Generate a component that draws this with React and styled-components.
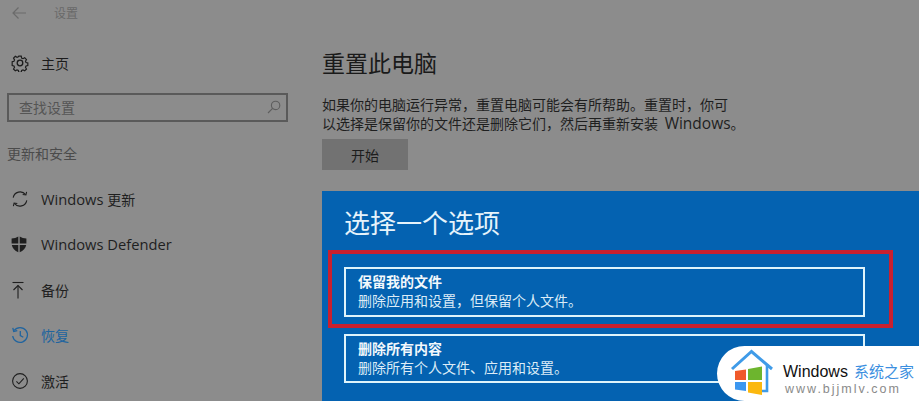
import styled, { createGlobalStyle } from "styled-components";

const cjk = `"Noto Sans CJK SC", "Noto Sans", sans-serif`;

const GlobalStyle = createGlobalStyle`
  html, body {
    margin: 0;
    padding: 0;
    background: #8c8c8c;
    overflow: hidden;
  }
  body {
    font-family: "Open Sans", ${cjk};
  }
`;

const navItems = [
  { label: "更新", latin: "Windows ", icon: "update" },
  { label: "", latin: "Windows Defender", icon: "shield" },
  { label: "备份", icon: "backup" },
  { label: "恢复", icon: "restore", active: true },
  { label: "激活", icon: "check" },
];

const options = [
  { title: "保留我的文件", text: "删除应用和设置，但保留个人文件。" },
  { title: "删除所有内容", text: "删除所有个人文件、应用和设置。" },
];

function NavIcon({ name }) {
  if (name === "home") {
    return (
      <svg width="18" height="18" viewBox="0 0 18 18" fill="none" stroke="currentColor" strokeWidth="1.3">
        <circle cx="9" cy="9" r="2.8" />
        <path d="M7.6 1.4h2.8l.4 2.1 1.5.7 1.9-1.1 2 2-1.1 1.9.6 1.5 2 .5v2.8l-2 .5-.6 1.5 1.1 1.9-2 2-1.9-1.1-1.5.6-.4 2.1H7.6l-.4-2.1-1.5-.6-1.9 1.1-2-2 1.1-1.9-.6-1.5-2-.5V7.5l2-.5.6-1.5-1.1-1.9 2-2 1.9 1.1 1.5-.7z" transform="translate(.9 .9) scale(.9)" />
      </svg>
    );
  }
  if (name === "update") {
    return (
      <svg width="18" height="18" viewBox="0 0 18 18" fill="none" stroke="currentColor" strokeWidth="1.1">
        <path d="M2.2 7.6A7 7 0 0 1 14.6 4.6" />
        <path d="M15.8 10.4A7 7 0 0 1 3.4 13.4" />
        <path d="M15.6 1.8l-.7 3.2-3.2-.5" />
        <path d="M2.4 16.2l.7-3.2 3.2.5" />
      </svg>
    );
  }
  if (name === "shield") {
    return (
      <svg width="16" height="17" viewBox="0 0 16 17" fill="currentColor">
        <path d="M7.3.6C5.5 1.8 3 2.5.6 2.6v5h6.7zM8.7.6c1.8 1.2 4.3 1.9 6.7 2v5H8.7zM.8 9c.5 3.3 3 5.8 6.5 7.2V9zM15.2 9c-.5 3.3-3 5.8-6.5 7.2V9z" />
      </svg>
    );
  }
  if (name === "backup") {
    return (
      <svg width="14" height="18" viewBox="0 0 14 18" fill="none" stroke="currentColor" strokeWidth="1.1">
        <path d="M1.5 1.5h11" />
        <path d="M7 17.5V4.5" />
        <path d="M2.5 9l4.5-4.5L11.5 9" />
      </svg>
    );
  }
  if (name === "restore") {
    return (
      <svg width="18" height="18" viewBox="0 0 18 18" fill="none" stroke="currentColor" strokeWidth="1.3">
        <path d="M3.2 4.4A7.4 7.4 0 1 1 1.7 10" />
        <path d="M1.8 1.8l.9 3.6 3.6-.7" />
        <path d="M9.3 5v4.6l3 1.7" />
      </svg>
    );
  }
  if (name === "check") {
    return (
      <svg width="18" height="18" viewBox="0 0 18 18" fill="none" stroke="currentColor" strokeWidth="1.1">
        <circle cx="9" cy="9" r="7.4" />
        <path d="M5.4 9.4l2.5 2.4 4.9-5.4" />
      </svg>
    );
  }
  return null;
}

export default function App() {
  return (
    <Page>
      <GlobalStyle />
      <Sidebar>
        <TopBar>
          <svg width="16" height="14" viewBox="0 0 16 14" fill="none" stroke="#6b6b6b" strokeWidth="1.2">
            <path d="M15 7H2M7.5 1.5L2 7l5.5 5.5" />
          </svg>
          <TopTitle>设置</TopTitle>
        </TopBar>
        <HomeRow>
          <IconSlot><NavIcon name="home" /></IconSlot>
          主页
        </HomeRow>
        <SearchBox>
          <SearchText>查找设置</SearchText>
          <svg width="14" height="14" viewBox="0 0 14 14" fill="none" stroke="#5e5e5e" strokeWidth="1.1">
            <circle cx="8.6" cy="5.4" r="4.2" />
            <path d="M5.6 8.4L1 13" />
          </svg>
        </SearchBox>
        <SectionLabel>更新和安全</SectionLabel>
        <NavList>
          {navItems.map((item) => (
            <NavRow key={item.icon} $active={item.active}>
              <IconSlot><NavIcon name={item.icon} /></IconSlot>
              {item.latin && <Latin>{item.latin}</Latin>}
              {item.label}
            </NavRow>
          ))}
        </NavList>
      </Sidebar>

      <Main>
        <Title>重置此电脑</Title>
        <Description>
          如果你的电脑运行异常，重置电脑可能会有所帮助。重置时，你可
          <br />
          以选择是保留你的文件还是删除它们，然后再重新安装 <Latin>Windows</Latin>。
        </Description>
        <StartButton>开始</StartButton>
        <BluePanel>
          <PanelTitle>选择一个选项</PanelTitle>
          <OptionList>
            {options.map((option, i) => (
              <OptionCard key={option.title} $short={i === 1}>
                <OptionTitle>{option.title}</OptionTitle>
                <OptionText>{option.text}</OptionText>
              </OptionCard>
            ))}
          </OptionList>
          <RedFrame />
        </BluePanel>
      </Main>

      <Watermark>
        <svg width="48" height="50" viewBox="0 0 48 50">
          <path d="M3 23L22.5 5.5 43 23" fill="none" stroke="#3f9be8" strokeWidth="3" />
          <path d="M38 18v27h-6" fill="none" stroke="#3f9be8" strokeWidth="2.6" />
          <path d="M6 25l11-1.500v10.500H6z" fill="#f0592a" />
          <path d="M19 23l14-2.500v13.500H19z" fill="#6db52e" />
          <path d="M6 36h11v9l-11-1.500z" fill="#3c97f0" />
          <path d="M19 36h14v13l-14-2.500z" fill="#fbb80f" />
        </svg>
        <BrandText>
          <BrandLine>
            <BrandName>Windows</BrandName>
            <BrandCn>系统之家</BrandCn>
          </BrandLine>
          <BrandUrl>www.bjjmlv.com</BrandUrl>
        </BrandText>
      </Watermark>
    </Page>
  );
}

const Page = styled.div`
  position: relative;
  width: 919px;
  height: 401px;
  overflow: hidden;
  display: grid;
  grid-template-columns: 322px 1fr;
  background: #8c8c8c;
`;

const Sidebar = styled.div`
  display: flex;
  flex-direction: column;
  padding-left: 7px;
`;

const TopBar = styled.div`
  height: 26px;
  display: flex;
  align-items: center;
  gap: 27px;
  padding-left: 4px;
`;

const TopTitle = styled.span`
  font-size: 12px;
  color: #696969;
`;

const IconSlot = styled.span`
  width: 34px;
  padding-left: 4px;
  box-sizing: border-box;
  display: flex;
  align-items: center;
`;

const Latin = styled.span`
  font-size: 14.7px;
  white-space: pre;
`;

const HomeRow = styled.div`
  height: 46px;
  margin-top: 14px;
  display: flex;
  align-items: center;
  font-size: 14px;
  color: #1c1c1c;
  margin-bottom: 7px;
`;

const SearchBox = styled.div`
  width: 281px;
  height: 29px;
  box-sizing: border-box;
  border: 2px solid #5a5a5a;
  display: flex;
  align-items: center;
  justify-content: space-between;
  padding: 0 5px 2px 10px;
`;

const SearchText = styled.span`
  font-size: 14px;
  color: #555;
`;

const SectionLabel = styled.div`
  margin-top: 21px;
  font-size: 14px;
  line-height: 22px;
  color: #4b4b4b;
`;

const NavList = styled.div`
  margin-top: 11px;
  display: flex;
  flex-direction: column;
`;

const NavRow = styled.div`
  height: 45.5px;
  display: flex;
  align-items: center;
  font-size: 14px;
  color: ${(p) => (p.$active ? "#20649f" : "#1f1f1f")};
`;

const Main = styled.div`
  display: flex;
  flex-direction: column;
  padding-top: 46px;
`;

const Title = styled.h1`
  margin: 0;
  font-size: 23px;
  font-weight: 400;
  line-height: 34px;
  color: #1a1a1a;
`;

const Description = styled.p`
  margin: 16px 0 0;
  font-size: 14px;
  line-height: 18px;
  color: #1f1f1f;
  white-space: nowrap;
  & > span {
    font-size: 15.5px;
    margin-left: 3px;
  }
`;

const StartButton = styled.div`
  margin-top: 6px;
  width: 86px;
  height: 31px;
  background: #727272;
  color: #1c1c1c;
  font-size: 14px;
  display: flex;
  align-items: center;
  justify-content: center;
`;

const BluePanel = styled.div`
  position: relative;
  margin-top: 21px;
  flex: 1;
  background: #0462b1;
  padding: 12px 54px 0 22px;
`;

const PanelTitle = styled.h2`
  margin: 0;
  font-size: 26px;
  font-weight: 400;
  line-height: 40px;
  color: #e6f3fb;
`;

const OptionList = styled.div`
  margin-top: 24px;
  display: flex;
  flex-direction: column;
  gap: 17px;
`;

const OptionCard = styled.div`
  height: ${(p) => (p.$short ? "49px" : "50px")};
  box-sizing: border-box;
  border: 2px solid #dff4fb;
  padding: 3px 12px 0;
  color: #dcecf7;
`;

const OptionTitle = styled.div`
  font-size: 14px;
  font-weight: 700;
  line-height: 19px;
  color: #f2f8fc;
`;

const OptionText = styled.div`
  font-size: 14px;
  line-height: 20px;
`;

const RedFrame = styled.div`
  position: absolute;
  left: 6px;
  top: 59px;
  width: 565px;
  height: 78px;
  box-sizing: border-box;
  border: 4px solid #c9202f;
`;

const Watermark = styled.div`
  position: absolute;
  left: 717px;
  top: 346px;
  width: 202px;
  height: 55px;
  box-sizing: border-box;
  padding: 0 0 0 12px;
  background: #fff;
  border-radius: 28px 0 0 28px;
  display: flex;
  align-items: flex-start;
  gap: 6px;
`;

const BrandText = styled.div`
  padding-top: 15px;
  display: flex;
  flex-direction: column;
  white-space: nowrap;
`;

const BrandLine = styled.div`
  display: flex;
  align-items: baseline;
  gap: 6px;
`;

const BrandName = styled.span`
  font-family: "Liberation Sans", sans-serif;
  font-size: 16px;
  line-height: 20px;
  color: #111;
`;

const BrandCn = styled.span`
  font-size: 15px;
  line-height: 20px;
  color: #3b8fe0;
`;

const BrandUrl = styled.span`
  padding-left: 2px;
  font-family: "Liberation Sans", sans-serif;
  font-size: 12.5px;
  letter-spacing: 2px;
  line-height: 14px;
  color: #8a8a8a;
`;
